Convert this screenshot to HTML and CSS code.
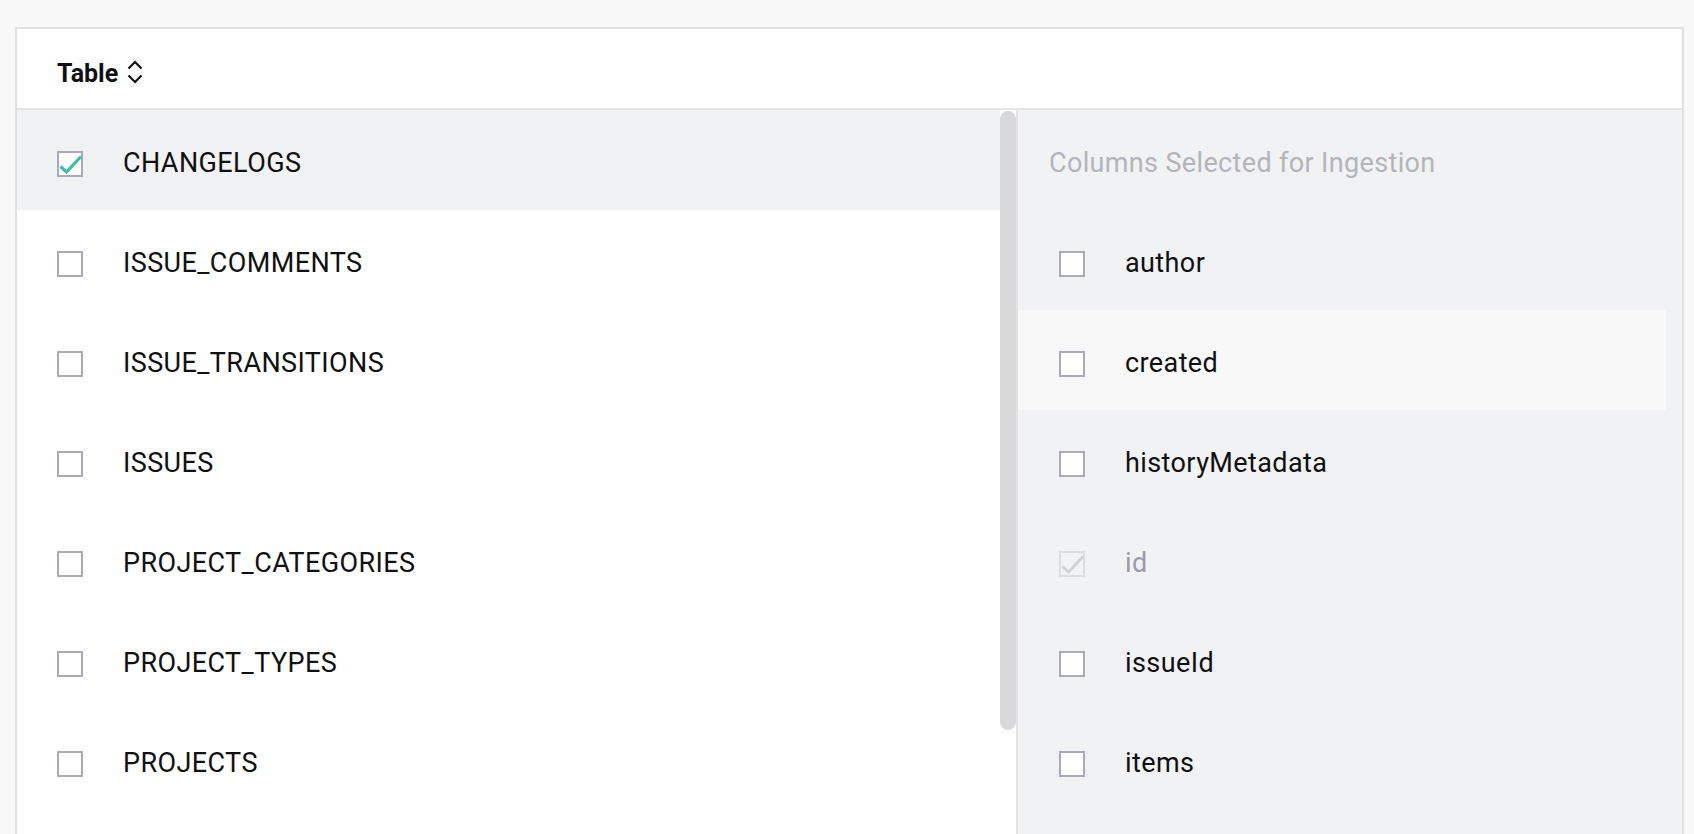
FILE: index.html
```html
<!DOCTYPE html>
<html lang="en">
<head>
<meta charset="utf-8">
<title>Table selection</title>
<link rel="stylesheet" href="styles.css">
</head>
<body>
<div class="card">
  <div class="card-header">
    <span class="header-title">Table</span>
    <svg class="sort-icon" width="16" height="24" viewBox="0 0 16 24"><polyline points="1.5,8.5 8,2 14.5,8.5" fill="none" stroke="#111" stroke-width="2.2"/><polyline points="1.5,15.5 8,22 14.5,15.5" fill="none" stroke="#111" stroke-width="2.2"/></svg>
  </div>
  <div class="card-body">
    <div class="left-panel">
      <ul class="table-list">
        <li class="row selected">
          <svg class="cb" width="26" height="26" viewBox="0 0 26 26"><rect x="1" y="1" width="24" height="24" fill="#fff" stroke="#a9a9b8" stroke-width="2"/><polyline points="3.5,15.5 9.5,21 24,5.5" fill="none" stroke="#3dbdae" stroke-width="3.2"/></svg>
          <span class="label">CHANGELOGS</span>
        </li>
        <li class="row">
          <svg class="cb" width="26" height="26" viewBox="0 0 26 26"><rect x="1" y="1" width="24" height="24" fill="#fff" stroke="#a9a9b8" stroke-width="2"/></svg>
          <span class="label">ISSUE_COMMENTS</span>
        </li>
        <li class="row">
          <svg class="cb" width="26" height="26" viewBox="0 0 26 26"><rect x="1" y="1" width="24" height="24" fill="#fff" stroke="#a9a9b8" stroke-width="2"/></svg>
          <span class="label">ISSUE_TRANSITIONS</span>
        </li>
        <li class="row">
          <svg class="cb" width="26" height="26" viewBox="0 0 26 26"><rect x="1" y="1" width="24" height="24" fill="#fff" stroke="#a9a9b8" stroke-width="2"/></svg>
          <span class="label">ISSUES</span>
        </li>
        <li class="row">
          <svg class="cb" width="26" height="26" viewBox="0 0 26 26"><rect x="1" y="1" width="24" height="24" fill="#fff" stroke="#a9a9b8" stroke-width="2"/></svg>
          <span class="label">PROJECT_CATEGORIES</span>
        </li>
        <li class="row">
          <svg class="cb" width="26" height="26" viewBox="0 0 26 26"><rect x="1" y="1" width="24" height="24" fill="#fff" stroke="#a9a9b8" stroke-width="2"/></svg>
          <span class="label">PROJECT_TYPES</span>
        </li>
        <li class="row">
          <svg class="cb" width="26" height="26" viewBox="0 0 26 26"><rect x="1" y="1" width="24" height="24" fill="#fff" stroke="#a9a9b8" stroke-width="2"/></svg>
          <span class="label">PROJECTS</span>
        </li>
      </ul>
      <div class="scroll-track"><div class="scroll-thumb"></div></div>
    </div>
    <div class="right-panel">
      <div class="panel-title">Columns Selected for Ingestion</div>
      <ul class="column-list">
        <li class="row">
          <svg class="cb" width="26" height="26" viewBox="0 0 26 26"><rect x="1" y="1" width="24" height="24" fill="#fff" stroke="#a9a9b8" stroke-width="2"/></svg>
          <span class="label">author</span>
        </li>
        <li class="row hover">
          <svg class="cb" width="26" height="26" viewBox="0 0 26 26"><rect x="1" y="1" width="24" height="24" fill="#fff" stroke="#a9a9b8" stroke-width="2"/></svg>
          <span class="label">created</span>
        </li>
        <li class="row">
          <svg class="cb" width="26" height="26" viewBox="0 0 26 26"><rect x="1" y="1" width="24" height="24" fill="#fff" stroke="#a9a9b8" stroke-width="2"/></svg>
          <span class="label">historyMetadata</span>
        </li>
        <li class="row disabled">
          <svg class="cb" width="26" height="26" viewBox="0 0 26 26"><rect x="1" y="1" width="24" height="24" fill="#f1f2f4" stroke="#dcdce1" stroke-width="2"/><polyline points="3.5,15.5 9.5,21 24,5.5" fill="none" stroke="#d2d2d8" stroke-width="3"/></svg>
          <span class="label">id</span>
        </li>
        <li class="row">
          <svg class="cb" width="26" height="26" viewBox="0 0 26 26"><rect x="1" y="1" width="24" height="24" fill="#fff" stroke="#a9a9b8" stroke-width="2"/></svg>
          <span class="label">issueId</span>
        </li>
        <li class="row">
          <svg class="cb" width="26" height="26" viewBox="0 0 26 26"><rect x="1" y="1" width="24" height="24" fill="#fff" stroke="#a9a9b8" stroke-width="2"/></svg>
          <span class="label">items</span>
        </li>
      </ul>
    </div>
  </div>
</div>
</body>
</html>
```

FILE: styles.css
```css
* { box-sizing: border-box; }

html, body {
  margin: 0;
  padding: 0;
  height: 834px;
  overflow: hidden;
  background: #f8f8f8;
  font-family: Roboto, "Liberation Sans", Arial, sans-serif;
  color: #111;
}

.card {
  margin: 27px 10px 0 15px;
  height: 807px;
  overflow: hidden;
  border: 2px solid #e1e1e1;
  border-bottom: none;
  background: #fff;
  display: flex;
  flex-direction: column;
}

.card-header {
  height: 81px;
  flex: none;
  border-bottom: 2px solid #e4e4e4;
  display: flex;
  align-items: center;
  gap: 9px;
  padding: 9px 0 0 40px;
  background: #fff;
}

.header-title {
  font-size: 25px;
  font-weight: 700;
  letter-spacing: 0;
}

.sort-icon { display: block; margin-top: -2px; }

.card-body {
  flex: 1;
  display: flex;
  min-height: 0;
}

.left-panel {
  width: 999px;
  flex: none;
  display: flex;
  background: #fff;
}

.table-list, .column-list {
  list-style: none;
  margin: 0;
  padding: 0;
}

.table-list { flex: 1; }

.row {
  height: 100px;
  display: flex;
  align-items: center;
  gap: 40px;
  padding-top: 6px;
  font-size: 27px;
  letter-spacing: 0.4px;
}

.table-list .row { padding-left: 40px; }

.row.selected { background: #f1f2f4; }

.cb { display: block; flex: none; margin-top: 2px; }

.label { line-height: 1; }

.scroll-track {
  width: 16px;
  flex: none;
  padding-top: 1px;
}

.scroll-thumb {
  height: 619px;
  background: #d9d9d9;
  border-radius: 8px;
}

.right-panel {
  flex: 1;
  background: #f1f2f4;
  border-left: 2px solid #e3e3e6;
  padding-right: 16px;
}

.panel-title {
  height: 100px;
  padding: 6px 0 0 31px;
  display: flex;
  align-items: center;
  font-size: 27px;
  letter-spacing: 0.35px;
  color: #b4b4ba;
}

.column-list .row { padding-left: 41px; }

.row.hover { background: #f8f8f8; }

.row.disabled .label { color: #9b9ba8; }
```
